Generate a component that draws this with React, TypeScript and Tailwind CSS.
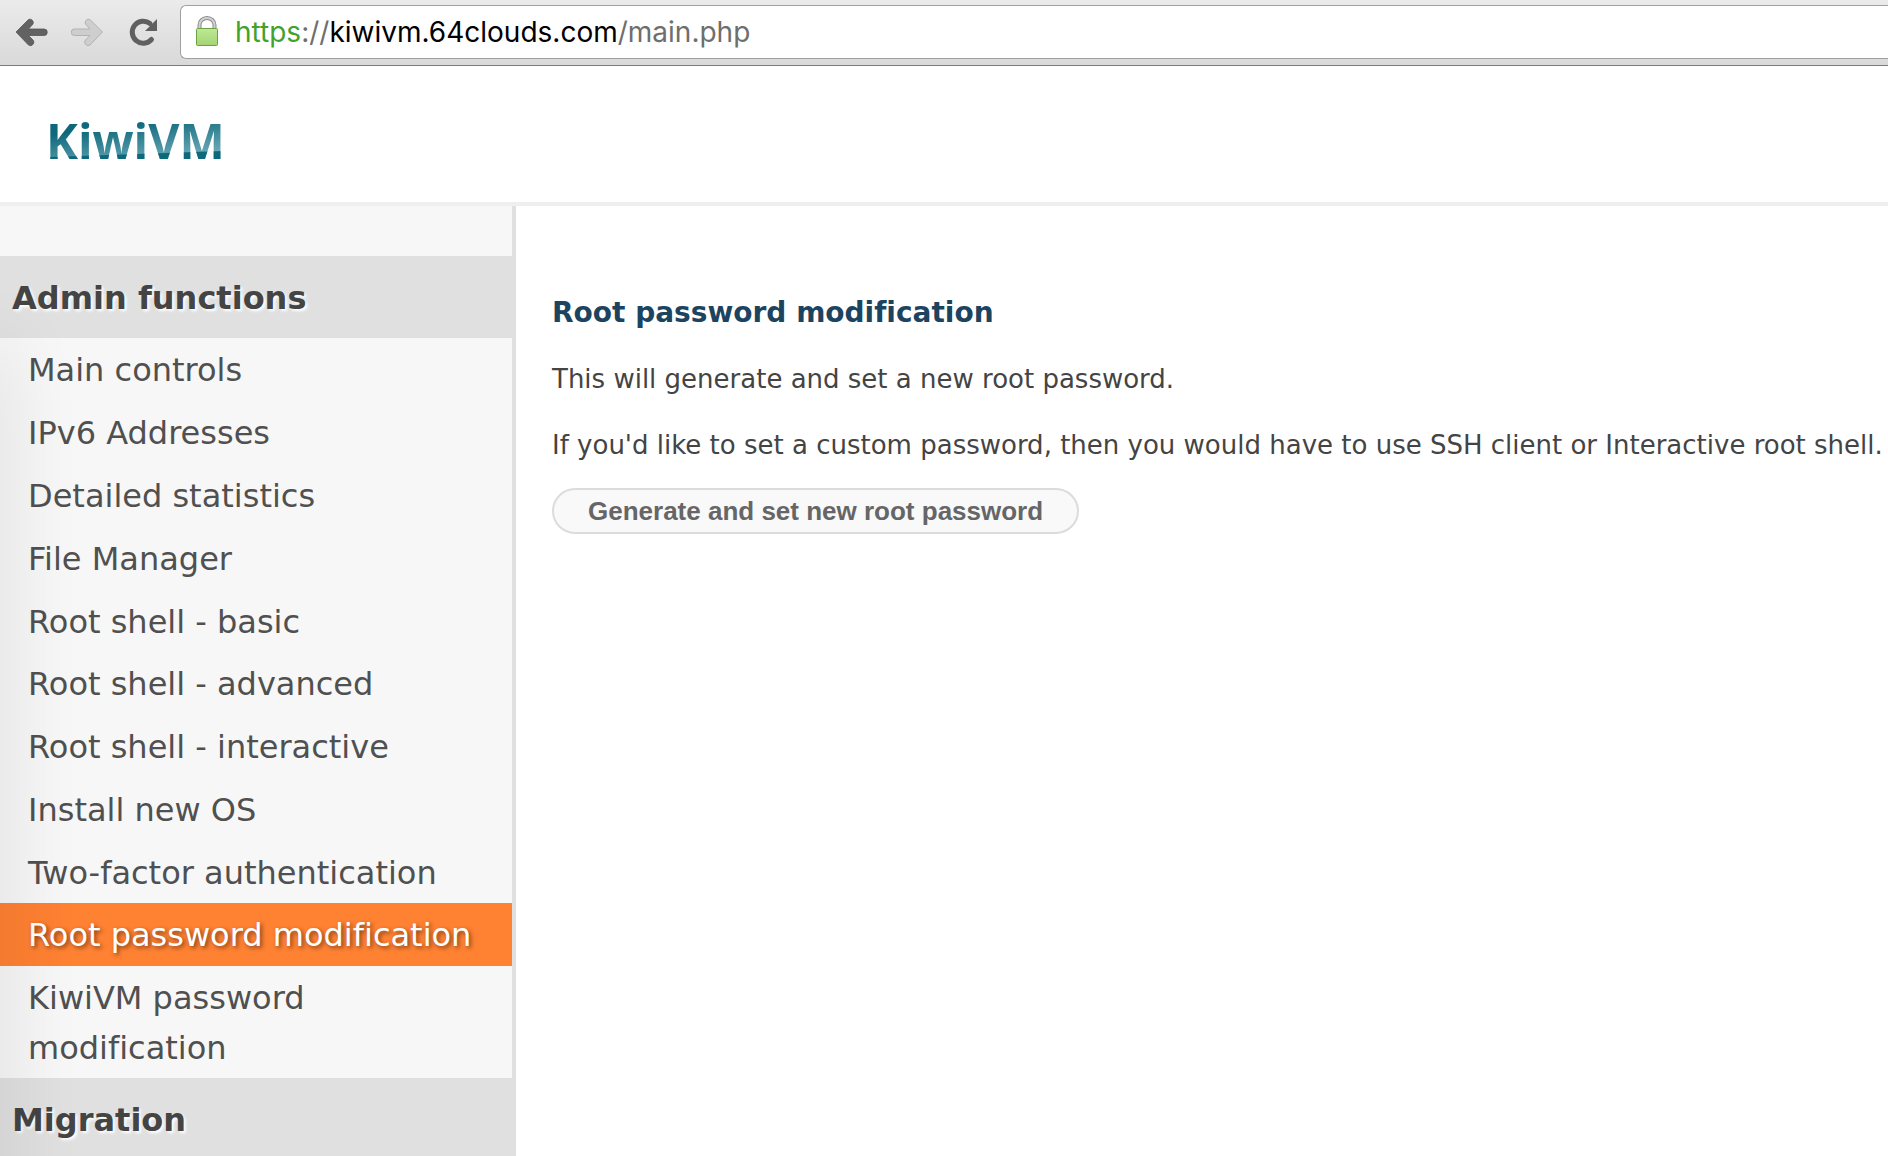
import React from "react";

const adminLinks = [
  "Main controls",
  "IPv6 Addresses",
  "Detailed statistics",
  "File Manager",
  "Root shell - basic",
  "Root shell - advanced",
  "Root shell - interactive",
  "Install new OS",
  "Two-factor authentication",
  "Root password modification",
  "KiwiVM password modification",
];

const current = "Root password modification";

function BackIcon() {
  return (
    <svg width="32" height="30" viewBox="0 0 32 30">
      <path d="M0 15L12.500 2.500A3.400 3.400 0 0 1 17 7L12.500 12H28A3.200 3.200 0 0 1 28 18.500H12.500L17 23A3.400 3.400 0 0 1 12.500 28Z" fill="#626262" stroke="#565656" strokeWidth="0.800" />
    </svg>
  );
}

function ForwardIcon() {
  return (
    <svg width="32" height="30" viewBox="0 0 32 30">
      <path d="M31.500 15L19 2.500A3.400 3.400 0 0 0 14.500 7L19 12H3.500A3.200 3.200 0 0 0 3.500 18.500H19L14.500 23A3.400 3.400 0 0 0 19 28Z" fill="#cecece" stroke="#b2b2b2" />
    </svg>
  );
}

function ReloadIcon() {
  return (
    <svg width="30" height="30" viewBox="0 0 30 30" fill="none">
      <path d="M21 6.500A11 11 0 1 0 22.500 22.500" stroke="#606060" strokeWidth="5" strokeLinecap="round" />
      <path d="M28 2V14H16Z" fill="#606060" />
    </svg>
  );
}

function LockIcon() {
  return (
    <svg width="24" height="32" viewBox="0 0 24 32" fill="none">
      <defs>
        <linearGradient id="lockBody" x1="0" y1="0" x2="0" y2="1">
          <stop offset="0" stopColor="#bfe897" />
          <stop offset="1" stopColor="#a3d573" />
        </linearGradient>
      </defs>
      <path d="M4.500 12V9a7.500 7 0 0 1 15 0V12" stroke="#8a8a8a" strokeWidth="4" />
      <path d="M4.500 12V9a7.500 7 0 0 1 15 0V12" stroke="#d2d2d2" strokeWidth="2" />
      <rect x="1.500" y="12.500" width="21" height="17" rx="1" fill="url(#lockBody)" stroke="#6aa340" />
    </svg>
  );
}

function SectionHeading({ children }: { children: React.ReactNode }) {
  return (
    <h2 className="flex h-[82px] items-center bg-[#e0e0e0] pt-0.5 pl-3 text-[32px] font-bold text-shadow-[2px_2px_3px_#fff]">
      {children}
    </h2>
  );
}

export default function App() {
  return (
    <div className="flex h-screen flex-col overflow-hidden bg-white font-['DejaVu_Sans',Verdana,sans-serif] text-[#444] [font-variant-ligatures:none]">
      <div className="flex h-[66px] shrink-0 items-center border-b border-[#7c7c7c] bg-linear-to-b from-[#ebebeb] to-[#d9d9d9] pb-0.5 pl-4">
        <button type="button" aria-label="Back"><BackIcon /></button>
        <button type="button" aria-label="Forward" className="ml-[23px]"><ForwardIcon /></button>
        <button type="button" aria-label="Reload" className="ml-[26px]"><ReloadIcon /></button>
        <div className="ml-[21px] flex h-[54px] flex-1 items-center rounded-l-md border border-r-0 border-[#a0a0a0] bg-white pl-[14px]">
          <LockIcon />
          <a href="#url" className="ml-4 whitespace-nowrap font-['Inter',sans-serif] text-[28px] text-[#6e6e6e]">
            <span className="text-[#44a12b]">https</span>://<span className="text-black">kiwivm.64clouds.com</span>/main.php
          </a>
        </div>
      </div>

      <header className="flex h-[140px] shrink-0 items-center border-b-4 border-[#efefef] pt-[14px] pl-[46px]">
        <a
          href="#home"
          className="bg-[linear-gradient(178deg,transparent_73%,#0d687c_75%),linear-gradient(172deg,#0d687c_25%,#6aa9b5_80%)] bg-clip-text font-['Open_Sans',sans-serif] text-[48px] leading-[48px] font-bold text-transparent"
        >
          KiwiVM
        </a>
      </header>

      <div className="flex min-h-0 flex-1">
        <nav className="relative w-[516px] shrink-0 overflow-hidden border-r-4 border-[#e0e0e0] bg-[#f7f7f7] pt-[50px]">
          <SectionHeading>Admin functions</SectionHeading>
          <ul className="grid min-h-[740px] grid-rows-[repeat(10,1fr)_auto] text-[32px] leading-[50px]">
            {adminLinks.map((label) => (
              <li key={label}>
                <a
                  href="#admin"
                  aria-current={label === current ? "page" : undefined}
                  className={
                    label === current
                      ? "flex h-full items-center bg-[#ff8132] pr-10 pl-7 whitespace-nowrap text-white text-shadow-[2px_2px_4px_rgba(0,0,0,0.5)]"
                      : "flex h-full items-center pt-[7px] pr-10 pb-[5px] pl-7 text-[#505050]"
                  }
                >
                  {label}
                </a>
              </li>
            ))}
          </ul>
          <SectionHeading>Migration</SectionHeading>
          <div className="pointer-events-none absolute top-[140px] -bottom-40 -left-10 w-10 shadow-[0_0_80px_rgba(0,0,0,0.14)]" />
        </nav>

        <main className="flex-1 pt-[83px] pl-9">
          <h1 className="text-[28px] leading-[48px] font-bold text-[#1c4460]">Root password modification</h1>
          <p className="mt-[18px] text-[26px] leading-[48px] whitespace-nowrap">This will generate and set a new root password.</p>
          <p className="mt-[18px] text-[26px] leading-[48px] whitespace-nowrap">
            If you'd like to set a custom password, then you would have to use SSH client or Interactive root shell.
          </p>
          <button
            type="button"
            className="mt-[19px] h-[46px] rounded-full border-2 border-[#dcdcdc] bg-[#f9f9f9] px-[34px] font-['Liberation_Sans',Arial,sans-serif] text-[26px] leading-none font-bold text-[#666]"
          >
            Generate and set new root password
          </button>
        </main>
      </div>
    </div>
  );
}
